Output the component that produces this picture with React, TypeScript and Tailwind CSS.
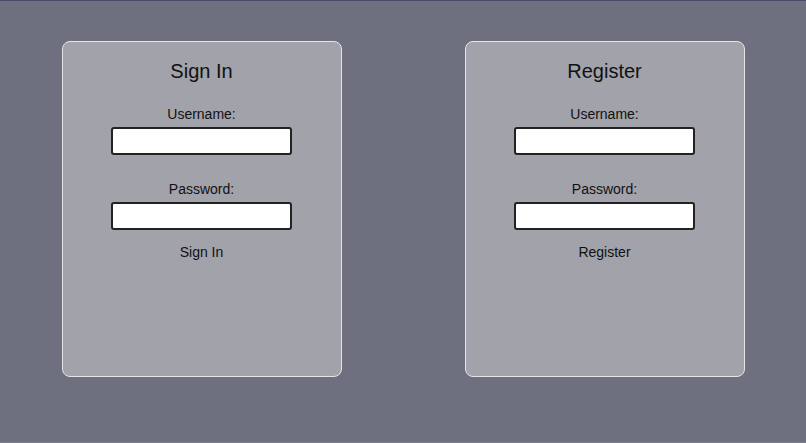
export default function App() {
  return (
    <div className="flex h-[443px] w-full items-start justify-around border-t border-t-[#4a486c] border-b border-b-[#7c7e8c] bg-[#6e7080] pt-10 font-['Liberation_Sans','Inter',sans-serif] text-[#111]">
      <AuthCard title="Sign In" action="Sign In" />
      <AuthCard title="Register" action="Register" />
    </div>
  );
}

function AuthCard({ title, action }: { title: string; action: string }) {
  return (
    <div className="flex h-[336px] w-[280px] flex-col items-center rounded-lg border border-[#e4e4ea] bg-[#a2a2aa] pt-[16px]">
      <h2 className="text-[20px] leading-[26px]">{title}</h2>
      <label className="mt-[22px] text-[14px] leading-[17px]">Username:</label>
      <input type="text" className="mt-[4px] h-[28px] w-[181px] rounded-[3px] border-2 border-[#222] bg-white" />
      <label className="mt-[26px] text-[14px] leading-[17px]">Password:</label>
      <input type="password" className="mt-[4px] h-[28px] w-[181px] rounded-[3px] border-2 border-[#222] bg-white" />
      <button className="mt-[14px] text-[14px] leading-[17px]">{action}</button>
    </div>
  );
}
